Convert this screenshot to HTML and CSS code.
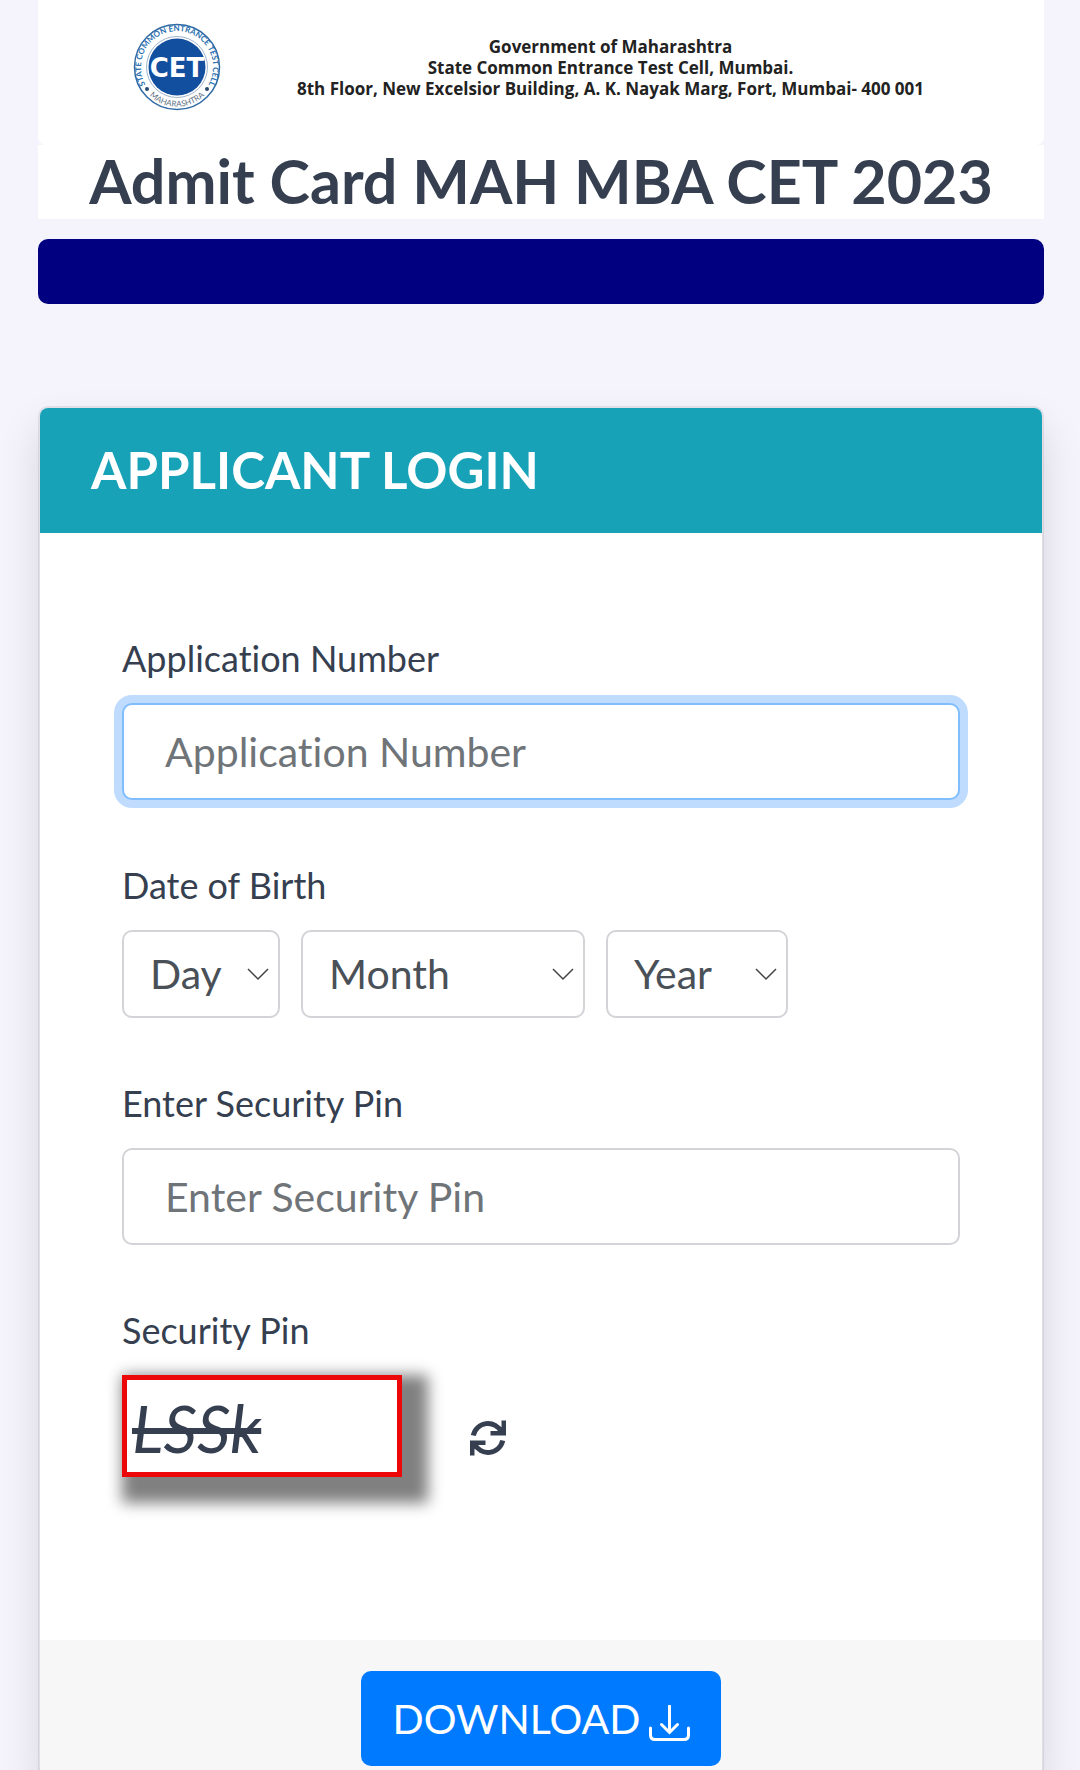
FILE: index.html
```html
<!DOCTYPE html>
<html lang="en">
<head>
<meta charset="utf-8">
<meta name="viewport" content="width=device-width, initial-scale=1">
<title>Admit Card MAH MBA CET 2023</title>
<link rel="stylesheet" href="styles.css">
</head>
<body>
<div class="page">
  <header>
    <div class="banner">
      <svg class="logo" viewBox="0 0 88 90" role="img" aria-label="State Common Entrance Test Cell">
        <defs>
          <path id="arc-top" d="M14.500 65.700A36 36 0 1 1 73.500 65.700"/>
          <path id="arc-bottom" d="M10 65.200A39.500 39.500 0 0 0 78 65.200"/>
        </defs>
        <circle cx="44" cy="45" r="42.500" fill="#fff" stroke="#2f6ba5" stroke-width="1.500"/>
        <circle cx="44" cy="45" r="30.500" fill="none" stroke="#9fb4cc" stroke-width="1"/>
        <circle cx="44" cy="45" r="28.500" fill="#134f9f"/>
        <text class="logo-ring" text-anchor="middle"><textPath href="#arc-top" startOffset="50%">STATE COMMON ENTRANCE TEST CELL</textPath></text>
        <text class="logo-state" text-anchor="middle"><textPath href="#arc-bottom" startOffset="50%">MAHARASHTRA</textPath></text>
        <circle cx="14" cy="67" r="2" fill="#29496e"/>
        <circle cx="74" cy="67" r="2" fill="#29496e"/>
        <text class="logo-name" x="44" y="55" text-anchor="middle">CET</text>
      </svg>
      <p class="address">Government of Maharashtra<br>State Common Entrance Test Cell, Mumbai.<br>8th Floor, New Excelsior Building, A. K. Nayak Marg, Fort, Mumbai- 400 001</p>
    </div>
    <h1 class="title">Admit Card MAH MBA CET 2023</h1>
    <div class="bar"></div>
  </header>

  <form class="card">
    <h2 class="card-header">APPLICANT LOGIN</h2>
    <div class="card-body">
      <div class="field">
        <label for="app-number">Application Number</label>
        <input class="control is-active" id="app-number" type="text" placeholder="Application Number">
      </div>
      <div class="field">
        <label for="day">Date of Birth</label>
        <div class="dates">
          <div class="picker day">
            <select id="day"><option>Day</option></select>
            <svg class="chevron" viewBox="0 0 22 13" aria-hidden="true"><path d="M1 1L11 11L21 1"/></svg>
          </div>
          <div class="picker month">
            <select aria-label="Month"><option>Month</option></select>
            <svg class="chevron" viewBox="0 0 22 13" aria-hidden="true"><path d="M1 1L11 11L21 1"/></svg>
          </div>
          <div class="picker year">
            <select aria-label="Year"><option>Year</option></select>
            <svg class="chevron" viewBox="0 0 22 13" aria-hidden="true"><path d="M1 1L11 11L21 1"/></svg>
          </div>
        </div>
      </div>
      <div class="field">
        <label for="pin">Enter Security Pin</label>
        <input class="control" id="pin" type="text" placeholder="Enter Security Pin">
      </div>
      <div class="field">
        <label for="captcha">Security Pin</label>
        <div class="captcha-row">
          <output class="captcha" id="captcha">LSSk</output>
          <button class="refresh" type="button" aria-label="New security pin">
            <svg viewBox="0 0 36 36" aria-hidden="true">
              <path d="M3.300 15.500A15 15 0 0 1 31.500 12M32.700 20.500A15 15 0 0 1 4.500 24" fill="none" stroke="#353f50" stroke-width="5"/>
              <path d="M31.500 0.500H36V15.500H20.500V11H27.500L31.500 7ZM4.500 35.500H0V20.500H15.500V25H8.500L4.500 29Z" fill="#353f50"/>
            </svg>
          </button>
        </div>
      </div>
    </div>
    <div class="card-footer">
      <button class="download" type="button">DOWNLOAD
        <svg viewBox="0 0 41 36" aria-hidden="true"><path d="M20.500 1V27M12.500 19.500L20.500 27.500L28.500 19.500M1.500 23V30Q1.500 34.500 6 34.500H35Q39.500 34.500 39.500 30V23"/></svg>
      </button>
    </div>
  </form>
</div>
</body>
</html>
```
FILE: styles.css
```css
* {
  box-sizing: border-box;
}

body {
  margin: 0;
  background: #f5f4fd;
  color: #353f50;
  font-family: Lato, sans-serif;
  font-variant-ligatures: none;
}

.page {
  padding: 0 36px 0 38px;
  overflow: hidden;
}

.banner {
  display: flex;
  align-items: flex-start;
  gap: 76px;
  min-height: 145px;
  padding: 22px 24px 0 95px;
  background: #fff;
  border-radius: 0 0 8px 8px;
}

.logo {
  flex: none;
  width: 88px;
  height: 90px;
}

.logo-ring {
  font: 700 8px Lato, sans-serif;
  fill: #2a70b0;
}

.logo-state {
  font: 400 8px Lato, sans-serif;
  fill: #5d6f84;
}

.logo-name {
  font: 700 26px "DejaVu Sans", sans-serif;
  fill: #fff;
}

.address {
  margin: 14px 0 0;
  color: #222;
  font: 700 17px/21px "Open Sans", sans-serif;
  text-align: center;
}

.title {
  margin: 0;
  padding-bottom: 2px;
  background: #fff;
  font-size: 61px;
  line-height: 72px;
  text-align: center;
}

.bar {
  height: 65px;
  margin-top: 20px;
  background: #000080;
  border-radius: 10px;
}

.card {
  margin-top: 102px;
  background: #fff;
  background-clip: padding-box;
  border: 2px solid rgba(0, 0, 0, 0.08);
  border-bottom: 0;
  border-radius: 10px 10px 0 0;
  box-shadow: 0 21px 42px rgba(0, 0, 0, 0.12);
}

.card-header {
  margin: 0;
  padding: 32px 51px 33px;
  background: #17a2b8;
  border-radius: 8px 8px 0 0;
  color: #fff;
  font-size: 51px;
  line-height: 60px;
}

.card-body {
  display: flex;
  flex-direction: column;
  gap: 65px;
  padding: 105px 82px 163px;
}

.field {
  display: flex;
  flex-direction: column;
  gap: 25px;
}

.field label {
  font-size: 36px;
  line-height: 40px;
}

.control,
.picker select {
  background: #fff;
  border: 2px solid #d3d4d8;
  border-radius: 10px;
  color: #495057;
  font: 400 41px/48px Lato, sans-serif;
  font-variant-ligatures: none;
}

.control {
  width: 100%;
  height: 97px;
  padding: 0 41px;
}

.control::placeholder {
  color: #6f7478;
  opacity: 1;
}

.control.is-active {
  border-color: #80bdff;
  box-shadow: 0 0 0 8px #bfdcff;
}

.dates {
  display: flex;
  gap: 21px;
}

.picker {
  position: relative;
}

.picker select {
  width: 100%;
  height: 88px;
  padding: 0 26px;
  appearance: none;
}

.day {
  width: 158px;
}

.month {
  width: 284px;
}

.year {
  width: 182px;
}

.chevron {
  position: absolute;
  top: 38px;
  right: 11px;
  width: 22px;
  height: 13px;
  fill: none;
  stroke: #444;
  stroke-width: 1.5;
  pointer-events: none;
}

.captcha-row {
  display: flex;
  align-items: center;
  gap: 68px;
}

.captcha {
  width: 280px;
  height: 102px;
  padding: 12px 5px 8px;
  background: #fff;
  border: 5px solid #ec0808;
  box-shadow: 13px 13px 14px 13px #808080;
  font-size: 66px;
  font-style: italic;
  line-height: 72px;
  text-decoration: line-through;
}

.refresh {
  width: 36px;
  height: 36px;
  margin-top: 24px;
  padding: 0;
  background: none;
  border: 0;
}

.refresh svg {
  display: block;
}

.card-footer {
  display: flex;
  justify-content: center;
  padding: 31px 0 4px;
  background: #f7f7f8;
}

.download {
  display: flex;
  align-items: center;
  justify-content: center;
  gap: 8px;
  width: 360px;
  height: 95px;
  padding: 0;
  background: #007bff;
  border: 0;
  border-radius: 10px;
  color: #fff;
  font: 400 41px/48px Lato, sans-serif;
}

.download svg {
  width: 41px;
  height: 36px;
  margin-top: 8px;
  fill: none;
  stroke: #fff;
  stroke-width: 3;
  stroke-linecap: round;
}
```
